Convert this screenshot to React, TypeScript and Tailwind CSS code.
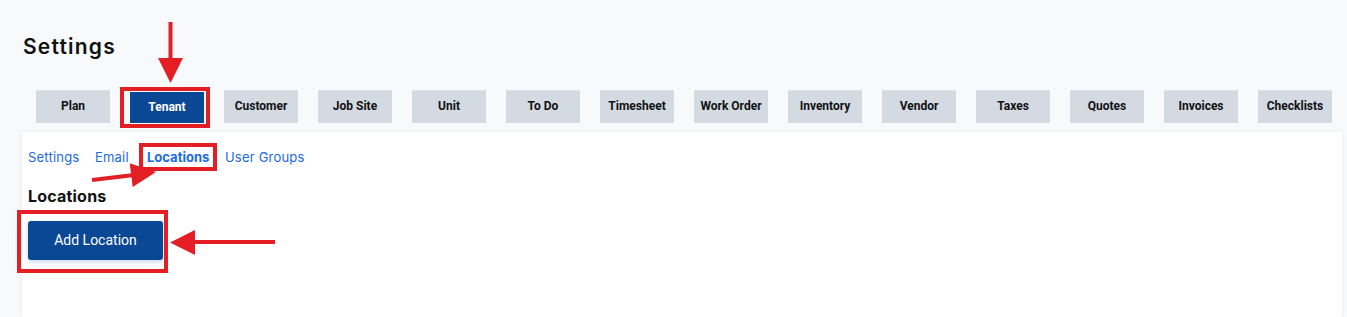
const tabs = [
  "Plan",
  "Tenant",
  "Customer",
  "Job Site",
  "Unit",
  "To Do",
  "Timesheet",
  "Work Order",
  "Inventory",
  "Vendor",
  "Taxes",
  "Quotes",
  "Invoices",
  "Checklists",
];

function Annotations() {
  const red = "#e31e24";
  return (
    <svg
      className="absolute left-0 top-0 pointer-events-none"
      width="1347"
      height="317"
      viewBox="0 0 1347 317"
    >
      {/* boxes */}
      <rect x="122" y="89" width="86" height="37" fill="none" stroke={red} strokeWidth="4" />
      <rect x="141" y="145" width="74" height="24" fill="none" stroke={red} strokeWidth="4" />
      <rect x="19" y="212" width="147" height="59" fill="none" stroke={red} strokeWidth="4" />
      {/* down arrow */}
      <line x1="170.5" y1="22" x2="170.5" y2="60" stroke={red} strokeWidth="4" />
      <polygon points="158,58 183,58 170.5,83" fill={red} />
      {/* diagonal arrow */}
      <line x1="92" y1="180" x2="134" y2="175" stroke={red} strokeWidth="4" />
      <polygon points="156,172 132.7,187 129.7,163.2" fill={red} />
      {/* left arrow */}
      <line x1="192" y1="242" x2="275" y2="242" stroke={red} strokeWidth="4" />
      <polygon points="195,230 195,255 170,242.5" fill={red} />
    </svg>
  );
}

export default function App() {
  return (
    <div className="relative h-[317px] bg-[#f8f9fb] overflow-hidden">
      <div className="h-full flex flex-col pl-[22px] pr-[5px] pt-[34px]">
        <h1 className="pl-px text-[21px] leading-[26px] tracking-[1.2px] font-semibold text-[#111] font-['Inter',sans-serif]">
          Settings
        </h1>

        <div className="mt-[30px] flex gap-[20px] pl-[14px] font-['Roboto',sans-serif]">
          {tabs.map((t) =>
            t === "Tenant" ? (
              <div
                key={t}
                className="shrink-0 w-[74px] mt-[2px] h-[31px] flex items-center justify-center pb-[2px] bg-[#0a4896] text-white text-[12px] font-bold"
              >
                {t}
              </div>
            ) : (
              <div
                key={t}
                className="shrink-0 w-[74px] h-[33px] flex items-center justify-center pb-[2px] bg-[#d3dae2] border-t border-[#dde3ea] text-[#111] text-[12px] font-bold"
              >
                {t}
              </div>
            )
          )}
        </div>

        <div className="mt-[9px] flex-1 bg-white px-[6px] pt-[15px] shadow-[0_0_4px_rgba(0,0,0,0.07)]">
          <div className="flex text-[13px] leading-[20px] tracking-[0.2px] text-[#1d6ae5] font-['Inter',sans-serif]">
            <span className="w-[67px]">Settings</span>
            <span className="w-[52px]">Email</span>
            <span className="w-[78px] font-bold tracking-[0px]">Locations</span>
            <span>User Groups</span>
          </div>
          <h2 className="mt-[17px] text-[16px] leading-[24px] tracking-[0.2px] font-bold text-[#111] font-['Inter',sans-serif]">
            Locations
          </h2>
          <button className="mt-[13px] w-[135px] h-[39px] rounded-[3px] bg-[#0a4896] text-white text-[14px] font-['Roboto',sans-serif] shadow-[0_2px_5px_rgba(30,100,200,0.25)]">
            Add Location
          </button>
        </div>
      </div>
      <Annotations />
    </div>
  );
}
